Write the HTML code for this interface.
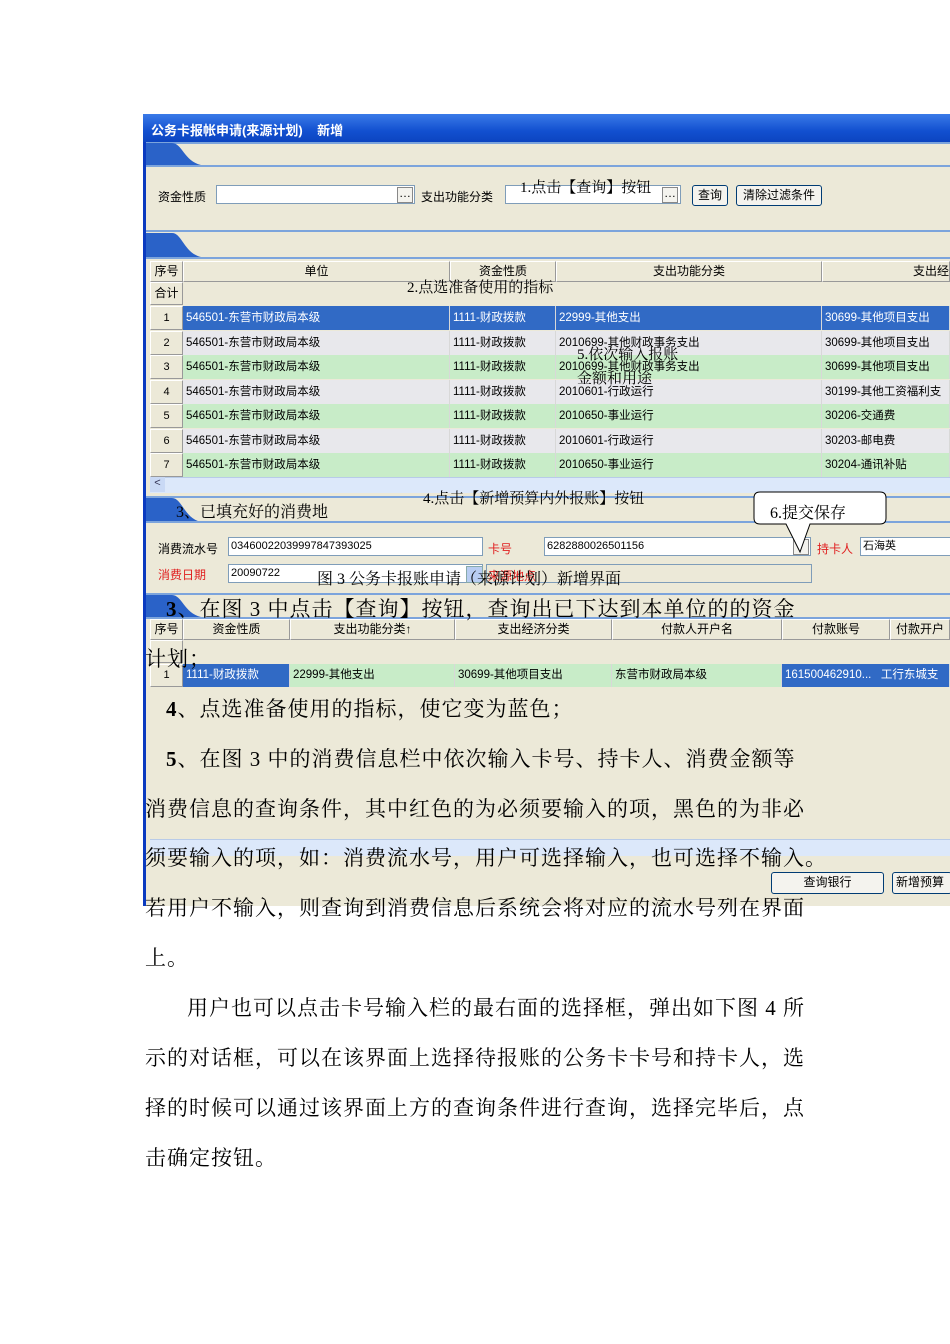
<!DOCTYPE html>
<html><head><meta charset="utf-8"><style>
body{margin:0;width:950px;height:1344px;background:#fff;position:relative;overflow:hidden;font-family:"Liberation Sans","Noto Sans CJK SC",sans-serif;}
.a{position:absolute;white-space:nowrap;}
.ui{font-size:12px;color:#000;}
.sec{position:absolute;left:146px;width:804px;background:#ece9d8;border-top:2px solid #7ca4dc;}
.inp{position:absolute;background:#fff;border:1px solid #7f9db9;height:19px;box-sizing:border-box;font-size:11px;line-height:17px;padding-left:2px;}
.btn{position:absolute;background:#f4f3ee;border:1px solid #003c74;border-radius:3px;font-size:12px;text-align:center;box-sizing:border-box;line-height:18px;}
.cell{position:absolute;font-size:11.5px;line-height:24px;box-sizing:border-box;padding-left:3px;border-right:1px solid #d8d8d8;}
.hd{position:absolute;background:#ece9d8;border:1px solid #fff;border-right-color:#999;border-bottom-color:#999;font-size:12px;text-align:center;box-sizing:border-box;}
.t{position:absolute;left:0;font-family:"Liberation Serif","Noto Serif CJK SC",serif;font-size:21px;letter-spacing:1px;white-space:nowrap;color:#000;}
.n{font-family:"Liberation Serif","Noto Serif CJK SC",serif;color:#000;position:absolute;white-space:nowrap;}
</style></head><body>
<div class="a" style="left:143px;top:114px;width:807px;height:792px;background:#ece9d8;border-left:3px solid #0a3ac0;box-sizing:border-box;"></div>
<div class="a" style="left:143px;top:114px;width:807px;height:28px;background:linear-gradient(#3a7ae8,#1250d0 60%,#0c44c0);"></div>
<div class="a" style="left:151px;top:120px;color:#fff;font-weight:bold;font-size:13px;">公务卡报帐申请(来源计划)&nbsp;&nbsp;&nbsp;&nbsp;新增</div>

<div class="sec" style="top:142px;height:24px;"></div>
<svg class="a" style="left:146px;top:143px" width="60" height="24"><path d="M0 0H26C36 0 38 18 55 22L60 23H0Z" fill="#2a62c8"/></svg>
<div class="a" style="left:146px;top:165px;width:804px;height:2px;background:#7ca4dc"></div>
<div class="a ui" style="left:158px;top:188px">资金性质</div>
<div class="inp" style="left:216px;top:185px;width:199px;"></div>
<div class="btn" style="left:397px;top:187px;width:16px;height:16px;line-height:10px;border-radius:0;border-color:#888">…</div>
<div class="a ui" style="left:421px;top:188px">支出功能分类</div>
<div class="inp" style="left:505px;top:185px;width:176px;"></div>
<div class="btn" style="left:662px;top:187px;width:16px;height:16px;line-height:10px;border-radius:0;border-color:#888">…</div>
<div class="btn" style="left:692px;top:185px;width:36px;height:21px;">查询</div>
<div class="btn" style="left:736px;top:185px;width:86px;height:21px;">清除过滤条件</div>

<div class="sec" style="top:230px;height:28px;"></div>
<svg class="a" style="left:146px;top:233px" width="60" height="26"><path d="M0 0H26C36 0 38 20 55 24L60 25H0Z" fill="#2a62c8"/></svg>
<div class="a" style="left:146px;top:257px;width:804px;height:2px;background:#7ca4dc"></div>
<div class="hd" style="left:150px;top:261px;width:33px;height:21px;">序号</div>
<div class="hd" style="left:183px;top:261px;width:267px;height:21px;">单位</div>
<div class="hd" style="left:450px;top:261px;width:106px;height:21px;">资金性质</div>
<div class="hd" style="left:556px;top:261px;width:266px;height:21px;">支出功能分类</div>
<div class="hd" style="left:822px;top:261px;width:128px;height:21px;text-align:right;">支出经</div>
<div class="hd" style="left:150px;top:282px;width:33px;height:23px;line-height:21px">合计</div>

<div id="rows"></div>

<div class="a" style="left:150px;top:477px;width:800px;height:15px;background:#dce8fa;border-top:1px solid #b8cbe8"></div>
<div class="a" style="left:150px;top:477px;width:15px;height:15px;background:#c9d9f5;font-size:11px;text-align:center;color:#335">&lt;</div>

<div class="sec" style="top:496px;height:26px;"></div>
<svg class="a" style="left:146px;top:498px" width="60" height="26"><path d="M0 0H26C36 0 38 20 55 24L60 25H0Z" fill="#2a62c8"/></svg>
<div class="a" style="left:146px;top:521px;width:804px;height:2px;background:#7ca4dc"></div>
<div class="a ui" style="left:158px;top:540px">消费流水号</div>
<div class="inp" style="left:228px;top:537px;width:255px;">03460022039997847393025</div>
<div class="a ui" style="left:488px;top:540px;color:#e02020">卡号</div>
<div class="inp" style="left:544px;top:537px;width:267px;">6282880026501156</div>
<div class="btn" style="left:793px;top:539px;width:16px;height:16px;border-radius:0;border-color:#888"></div>
<div class="a ui" style="left:817px;top:540px;color:#e02020">持卡人</div>
<div class="inp" style="left:860px;top:537px;width:92px;">石海英</div>
<div class="a ui" style="left:158px;top:566px;color:#e02020">消费日期</div>
<div class="inp" style="left:228px;top:564px;width:255px;">20090722</div>
<div class="a" style="left:466px;top:566px;width:15px;height:15px;background:#b8cdf2;border:1px solid #8aa"></div>
<div class="inp" style="left:486px;top:564px;width:326px;background:#ece9d8;color:#aaa"></div>
<div class="a ui" style="left:488px;top:567px;color:#e02020">来源地点</div>

<div class="sec" style="top:593px;height:25px;"></div>
<svg class="a" style="left:146px;top:595px" width="60" height="24"><path d="M0 0H26C36 0 38 18 55 22L60 23H0Z" fill="#2a62c8"/></svg>
<div class="a" style="left:146px;top:617px;width:804px;height:2px;background:#7ca4dc"></div>
<div class="hd" style="left:150px;top:619px;width:33px;height:21px;">序号</div>
<div class="hd" style="left:183px;top:619px;width:107px;height:21px;">资金性质</div>
<div class="hd" style="left:290px;top:619px;width:165px;height:21px;">支出功能分类↑</div>
<div class="hd" style="left:455px;top:619px;width:157px;height:21px;">支出经济分类</div>
<div class="hd" style="left:612px;top:619px;width:170px;height:21px;">付款人开户名</div>
<div class="hd" style="left:782px;top:619px;width:108px;height:21px;">付款账号</div>
<div class="hd" style="left:890px;top:619px;width:60px;height:21px;">付款开户</div>
<div class="hd" style="left:150px;top:640px;width:33px;height:23px;"></div>
<div class="hd" style="left:150px;top:664px;width:33px;height:23px;line-height:21px;font-size:11px">1</div>
<div class="cell" style="left:183px;top:664px;width:107px;height:23px;background:#316ac5;color:#fff;line-height:23px">1111-财政拨款</div>
<div class="cell" style="left:290px;top:664px;width:165px;height:23px;background:#c8ecc8;line-height:23px">22999-其他支出</div>
<div class="cell" style="left:455px;top:664px;width:157px;height:23px;background:#c8ecc8;line-height:23px">30699-其他项目支出</div>
<div class="cell" style="left:612px;top:664px;width:170px;height:23px;background:#c8ecc8;line-height:23px">东营市财政局本级</div>
<div class="cell" style="left:782px;top:664px;width:168px;height:23px;background:#316ac5;color:#fff;line-height:23px">161500462910...&nbsp;&nbsp;&nbsp;工行东城支</div>
<div class="a" style="left:150px;top:839px;width:800px;height:16px;background:#dce8fa;border-top:1px solid #b8cbe8"></div>
<div class="btn" style="left:771px;top:872px;width:113px;height:22px;">查询银行</div>
<div class="btn" style="left:892px;top:872px;width:60px;height:22px;text-align:left;padding-left:3px">新增预算</div>

<svg class="a" style="left:752px;top:490px" width="140" height="70"><path d="M8 2H128Q134 2 134 8V28Q134 34 128 34H58L48 62L34 34H8Q2 34 2 28V8Q2 2 8 2Z" fill="#fff" stroke="#000" stroke-width="1"/></svg>
<div class="n" style="left:770px;top:500px;font-size:16px">6.提交保存</div>

<div class="n" style="left:520px;top:176px;font-size:15px">1.点击【查询】按钮</div>
<div class="n" style="left:407px;top:276px;font-size:15px">2.点选准备使用的指标</div>
<div class="n" style="left:577px;top:343px;font-size:15px">5.依次输入报账</div>
<div class="n" style="left:577px;top:367px;font-size:15px">金额和用途</div>
<div class="n" style="left:423px;top:487px;font-size:15px">4.点击【新增预算内外报账】按钮</div>
<div class="n" style="left:176px;top:499px;font-size:16px">3、已填充好的消费地</div>
<div class="n" style="left:317px;top:566px;font-size:16px">图 3 公务卡报账申请（来源计划）新增界面</div>

<div class="t" style="left:166px;top:593px"><b>3</b>、在图 3 中点击【查询】按钮，查询出已下达到本单位的的资金</div>
<div class="t" style="left:145px;top:643px">计划；</div>
<div class="t" style="left:166px;top:693px"><b>4</b>、点选准备使用的指标，使它变为蓝色；</div>
<div class="t" style="left:166px;top:743px"><b>5</b>、在图 3 中的消费信息栏中依次输入卡号、持卡人、消费金额等</div>
<div class="t" style="left:145px;top:793px">消费信息的查询条件，其中红色的为必须要输入的项，黑色的为非必</div>
<div class="t" style="left:145px;top:842px">须要输入的项，如：消费流水号，用户可选择输入，也可选择不输入。</div>
<div class="t" style="left:145px;top:892px">若用户不输入，则查询到消费信息后系统会将对应的流水号列在界面</div>
<div class="t" style="left:145px;top:942px">上。</div>
<div class="t" style="left:187px;top:992px">用户也可以点击卡号输入栏的最右面的选择框，弹出如下图 4 所</div>
<div class="t" style="left:145px;top:1042px">示的对话框，可以在该界面上选择待报账的公务卡卡号和持卡人，选</div>
<div class="t" style="left:145px;top:1092px">择的时候可以通过该界面上方的查询条件进行查询，选择完毕后，点</div>
<div class="t" style="left:145px;top:1142px">击确定按钮。</div>

<script>
var d=[["22999-其他支出","30699-其他项目支出"],["2010699-其他财政事务支出","30699-其他项目支出"],["2010699-其他财政事务支出","30699-其他项目支出"],["2010601-行政运行","30199-其他工资福利支"],["2010650-事业运行","30206-交通费"],["2010601-行政运行","30203-邮电费"],["2010650-事业运行","30204-通讯补贴"]];
var h="";
for(var i=0;i<7;i++){var y=306+i*24.5;var bg=i==0?"#316ac5":(i%2?"#e8e8ec":"#c8ecc8");var c=i==0?"#fff":"#000";
h+='<div class="hd" style="left:150px;top:'+y+'px;width:33px;height:24px;line-height:22px;font-size:11px">'+(i+1)+'</div>';
h+='<div class="cell" style="left:183px;top:'+y+'px;width:267px;height:24px;background:'+bg+';color:'+c+'">546501-东营市财政局本级</div>';
h+='<div class="cell" style="left:450px;top:'+y+'px;width:106px;height:24px;background:'+bg+';color:'+c+'">1111-财政拨款</div>';
h+='<div class="cell" style="left:556px;top:'+y+'px;width:266px;height:24px;background:'+bg+';color:'+c+'">'+d[i][0]+'</div>';
h+='<div class="cell" style="left:822px;top:'+y+'px;width:128px;height:24px;background:'+bg+';color:'+c+'">'+d[i][1]+'</div>';}
document.getElementById("rows").innerHTML=h;
</script>
</body></html>
